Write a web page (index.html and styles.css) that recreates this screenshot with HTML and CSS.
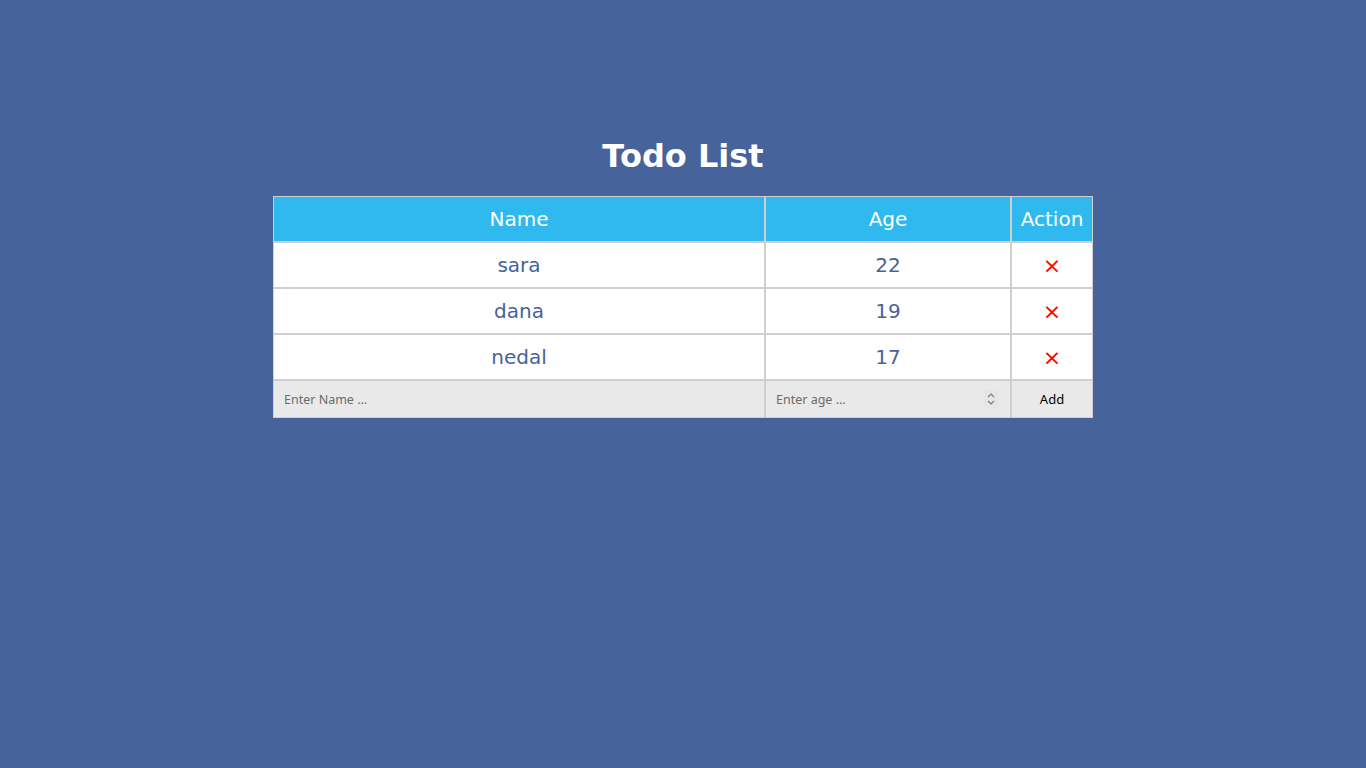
FILE: index.html
```html
<!DOCTYPE html>
<html>
<head>
<meta charset="utf-8">
<title>Todo List</title>
<link rel="stylesheet" href="styles.css">
</head>
<body>
<div class="app">
  <h1 class="title">Todo List</h1>
  <table class="todo">
    <thead>
      <tr><th class="c-name">Name</th><th class="c-age">Age</th><th class="c-act">Action</th></tr>
    </thead>
    <tbody>
      <tr><td>sara</td><td>22</td><td><span class="del">×</span></td></tr>
      <tr><td>dana</td><td>19</td><td><span class="del">×</span></td></tr>
      <tr><td>nedal</td><td>17</td><td><span class="del">×</span></td></tr>
      <tr class="form-row">
        <td><input class="field" type="text" placeholder="Enter Name ..."></td>
        <td>
          <div class="num-wrap">
            <input class="field num" type="number" placeholder="Enter age ...">
            <svg class="spin" width="14" height="18" viewBox="0 0 14 18" aria-hidden="true">
              <path d="M4 7 L7 4 L10 7" fill="none" stroke="#7a7a7a" stroke-width="1.2"/>
              <path d="M4 11 L7 14 L10 11" fill="none" stroke="#7a7a7a" stroke-width="1.2"/>
            </svg>
          </div>
        </td>
        <td><button class="add">Add</button></td>
      </tr>
    </tbody>
  </table>
</div>
</body>
</html>
```

FILE: styles.css
```css
html, body {
  margin: 0;
  padding: 0;
  background: #46639c;
  font-family: "DejaVu Sans", sans-serif;
}
.app {
  padding-top: 138px;
  display: flex;
  flex-direction: column;
  align-items: center;
}
.title {
  margin: 0 0 21px;
  font-size: 32px;
  line-height: 37px;
  font-weight: bold;
  color: #fff;
}
.todo {
  width: 820px;
  table-layout: fixed;
  border-collapse: separate;
  border-spacing: 0;
  border: 1px solid #d0d0d0;
}
.todo th, .todo td {
  box-sizing: border-box;
  border-right: 2px solid #cfcfcf;
  border-bottom: 2px solid #cfcfcf;
  text-align: center;
  padding: 0;
}
.todo th:last-child, .todo td:last-child { border-right: none; }
.todo tr.form-row td { border-bottom: none; }
.todo th {
  background: #2fb9ef;
  color: #fff;
  font-weight: normal;
  font-size: 20px;
  height: 46px;
}
.c-name { width: 492px; }
.c-age { width: 246px; }
.c-act { width: 80px; }
.todo td {
  background: #fff;
  color: #46639c;
  font-size: 20px;
  height: 46px;
}
.del {
  color: #ff0000;
  font-size: 22px;
}
.todo .form-row td {
  background: #e9e9e9;
  height: 36px;
}
.num-wrap {
  position: relative;
}
.field {
  display: block;
  width: 100%;
  box-sizing: border-box;
  height: 36px;
  border: none;
  background: #e9e9e9;
  padding: 0 10px;
  font-family: "Noto Sans", sans-serif;
  font-size: 12.5px;
  color: #333;
  outline: none;
}
.num { -moz-appearance: textfield; }
.num::-webkit-inner-spin-button,
.num::-webkit-outer-spin-button { -webkit-appearance: none; margin: 0; }
.spin {
  position: absolute;
  right: 12px;
  top: 9px;
  background: #e6e6e8;
}
.field::placeholder { color: #6b6b6b; }
.add {
  width: 100%;
  height: 36px;
  border: none;
  background: #e9e9e9;
  font-family: "Noto Sans", sans-serif;
  font-size: 13px;
  color: #000;
  cursor: pointer;
}
```
